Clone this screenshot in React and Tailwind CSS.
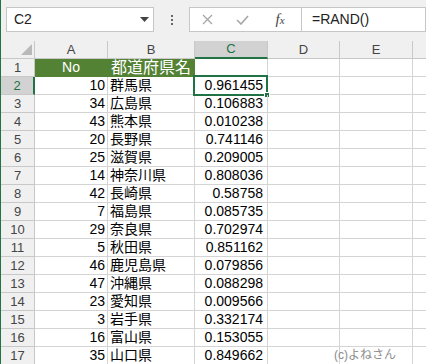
import React from 'react';

const rows = [
  [10, '群馬県', '0.961455'],
  [34, '広島県', '0.106883'],
  [43, '熊本県', '0.010238'],
  [20, '長野県', '0.741146'],
  [25, '滋賀県', '0.209005'],
  [14, '神奈川県', '0.808036'],
  [42, '長崎県', '0.58758'],
  [7, '福島県', '0.085735'],
  [29, '奈良県', '0.702974'],
  [5, '秋田県', '0.851162'],
  [46, '鹿児島県', '0.079856'],
  [47, '沖縄県', '0.088298'],
  [23, '愛知県', '0.009566'],
  [3, '岩手県', '0.332174'],
  [16, '富山県', '0.153055'],
  [35, '山口県', '0.849662'],
];

const font = { fontFamily: '"Liberation Sans", "Noto Sans CJK JP", sans-serif' };

function FormulaBar() {
  return (
    <div className="flex items-start h-[41px] pt-[7px] pl-[5px] bg-[#f0f0f0]">
      <div className="w-[148px] h-[25px] bg-white border border-[#c6c6c6] flex items-center justify-between pl-[7px] pr-[4px]">
        <span className="text-[14px] text-[#222]">C2</span>
        <svg width="9" height="5" viewBox="0 0 9 5">
          <path d="M0 0h9L4.5 5z" fill="#444" />
        </svg>
      </div>
      <div className="w-[35px] h-[25px] flex flex-col items-center justify-center gap-[2px]">
        <span className="w-[2px] h-[2px] bg-[#666]" />
        <span className="w-[2px] h-[2px] bg-[#666]" />
        <span className="w-[2px] h-[2px] bg-[#666]" />
      </div>
      <div className="w-[113px] h-[25px] bg-white border border-[#c6c6c6] flex items-center">
        <div className="w-[34px] flex justify-center">
          <svg width="11" height="11" viewBox="0 0 11 11">
            <path d="M1 1l9 9M10 1l-9 9" stroke="#a6a6a6" strokeWidth="1.3" />
          </svg>
        </div>
        <div className="w-[36px] flex justify-center">
          <svg width="13" height="10" viewBox="0 0 13 10">
            <path d="M1 5l4 4 7-8" stroke="#a6a6a6" strokeWidth="1.6" fill="none" />
          </svg>
        </div>
        <div className="w-[40px] flex justify-center">
          <span className="italic text-[15px] text-[#444] font-['Liberation_Serif',serif]">
            f<span className="text-[11px]">x</span>
          </span>
        </div>
      </div>
      <div className="flex-1 h-[25px] bg-white border border-l-0 border-[#c6c6c6] flex items-center pl-[10px]">
        <span className="text-[14px] text-[#222]">=RAND()</span>
      </div>
    </div>
  );
}

function HeaderRow() {
  const cols = [
    ['A', 'w-[73px]'],
    ['B', 'w-[87px]'],
    ['C', 'w-[73px]'],
    ['D', 'w-[72px]'],
    ['E', 'w-[73px]'],
  ];
  return (
    <div className="flex h-[18px] bg-[#f0f0f0]">
      <div className="w-[34px] shrink-0 border-r border-b border-[#c8c8c8] relative">
        <svg className="absolute right-[2px] bottom-[3px]" width="11" height="11" viewBox="0 0 11 11">
          <path d="M11 0v11H0z" fill="#b9b9b9" />
        </svg>
      </div>
      {cols.map(([c, w]) =>
        c === 'C' ? (
          <div key={c} className={`${w} shrink-0 bg-[#d2d2d2] border-r border-[#c8c8c8] border-b-2 border-b-[#217346] flex items-center justify-center text-[13px] text-[#217346]`}>
            {c}
          </div>
        ) : (
          <div key={c} className={`${w} shrink-0 border-r border-b border-[#c8c8c8] flex items-center justify-center text-[13px] text-[#444]`}>
            {c}
          </div>
        )
      )}
      <div className="flex-1 border-b border-[#c8c8c8]" />
    </div>
  );
}

function Row({ n, a, b, c, head, selected }) {
  return (
    <div className="flex h-[18px] bg-white">
      <div
        className={
          selected
            ? 'w-[34px] shrink-0 bg-[#d2d2d2] border-r-2 border-r-[#217346] border-b border-b-[#c8c8c8] flex items-center justify-center text-[13px] text-[#217346]'
            : 'w-[34px] shrink-0 bg-[#f0f0f0] border-r border-b border-[#c8c8c8] flex items-center justify-center text-[13px] text-[#444]'
        }
      >
        {n}
      </div>
      <div
        className={
          head
            ? 'w-[73px] shrink-0 bg-[#548235] border-r border-b border-[#548235] flex items-center justify-center text-[14px] text-white'
            : 'w-[73px] shrink-0 border-r border-b border-[#d4d4d4] flex items-center justify-end pr-[2px] text-[14px] text-black'
        }
      >
        {a}
      </div>
      <div
        className={
          head
            ? 'w-[87px] shrink-0 bg-[#548235] border-r border-b border-[#548235] flex items-center pl-[3px] text-[16px] text-white'
            : 'w-[87px] shrink-0 border-r border-b border-[#d4d4d4] flex items-center pl-[2px] text-[14px] text-black'
        }
      >
        {b}
      </div>
      <div className="w-[73px] shrink-0 border-r border-b border-[#d4d4d4] flex items-center justify-end pr-[4px] text-[14px] text-black relative">
        {c}
        {selected && (
          <div className="absolute -left-[2px] -top-[2px] w-[75px] h-[21px] border-2 border-[#217346]">
            <div className="absolute -right-[4px] -bottom-[4px] w-[6px] h-[6px] bg-[#217346] border border-white" />
          </div>
        )}
      </div>
      <div className="w-[72px] shrink-0 border-r border-b border-[#d4d4d4]" />
      <div className="w-[73px] shrink-0 border-r border-b border-[#d4d4d4]" />
      <div className="flex-1 border-b border-[#d4d4d4]" />
    </div>
  );
}

export default function App() {
  return (
    <div className="w-[426px] h-[364px] overflow-hidden relative border-l border-[#217346] bg-[#f0f0f0]" style={font}>
      <FormulaBar />
      <HeaderRow />
      <Row n={1} a="No" b="都道府県名" c="" head />
      {rows.map(([a, b, c], i) => (
        <Row key={i} n={i + 2} a={a} b={b} c={c} selected={i === 0} />
      ))}
      <div className="absolute left-[333px] top-[346px] text-[12px] text-[#8c8c8c]">(c)よねさん</div>
    </div>
  );
}
